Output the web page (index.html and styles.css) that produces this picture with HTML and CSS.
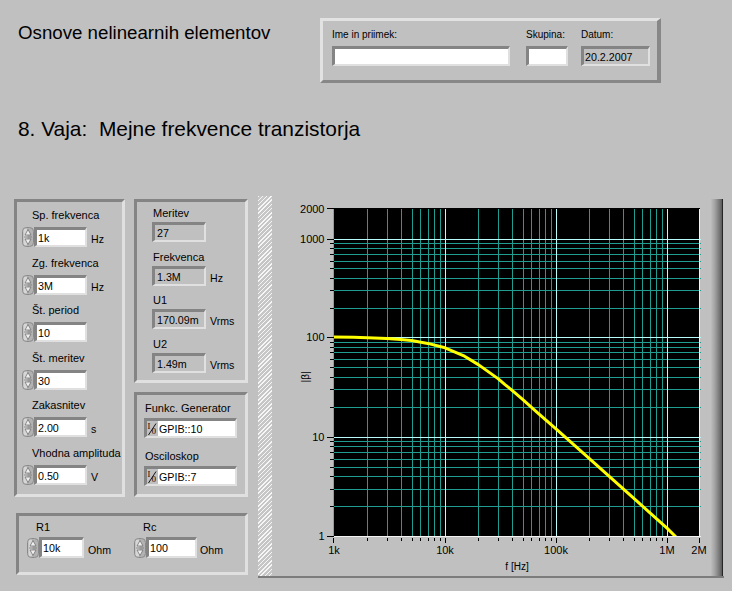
FILE: index.html
```html
<!DOCTYPE html>
<html>
<head>
<meta charset="utf-8">
<title>Mejne frekvence tranzistorja</title>
<link rel="stylesheet" href="styles.css">
</head>
<body>
<svg class="defs" width="0" height="0">
  <symbol id="spin" viewBox="0 0 12 20">
    <rect x="0.5" y="0.5" width="11" height="19" rx="4" fill="#b2b2b2" stroke="#8a8a8a"/>
    <rect x="1.5" y="1.5" width="4" height="17" rx="2" fill="#d6d6d6"/>
    <path d="M2 10H10" stroke="#7a7a7a" stroke-width="0.8"/>
    <path d="M3 8L6 2.5L9 8Z" fill="#eeeeee" stroke="#666" stroke-width="0.7"/>
    <path d="M3 12L6 17.5L9 12Z" fill="#eeeeee" stroke="#666" stroke-width="0.7"/>
  </symbol>
</svg>

<div class="top">
  <h1 class="title">Osnove nelinearnih elementov</h1>
  <div class="idpanel">
    <div class="fld f-name"><span class="slbl">Ime in priimek:</span><div class="box wbox hbox"></div></div>
    <div class="fld f-grp"><span class="slbl">Skupina:</span><div class="box wbox hbox"></div></div>
    <div class="fld f-date"><span class="slbl">Datum:</span><div class="box hbox">20.2.2007</div></div>
  </div>
</div>

<h2 class="subtitle">8. Vaja:  Mejne frekvence tranzistorja</h2>

<div class="main">
  <div class="leftcol">
    <div class="upper">
      <div class="panel p-ctl">
        <div class="crow"><span class="lbl">Sp. frekvenca</span>
          <div class="ctl"><svg class="spin"><use href="#spin"/></svg><div class="box wbox">1k</div><span class="unit">Hz</span></div></div>
        <div class="crow"><span class="lbl">Zg. frekvenca</span>
          <div class="ctl"><svg class="spin"><use href="#spin"/></svg><div class="box wbox">3M</div><span class="unit">Hz</span></div></div>
        <div class="crow"><span class="lbl">Št. period</span>
          <div class="ctl"><svg class="spin"><use href="#spin"/></svg><div class="box wbox">10</div></div></div>
        <div class="crow"><span class="lbl">Št. meritev</span>
          <div class="ctl"><svg class="spin"><use href="#spin"/></svg><div class="box wbox">30</div></div></div>
        <div class="crow"><span class="lbl">Zakasnitev</span>
          <div class="ctl"><svg class="spin"><use href="#spin"/></svg><div class="box wbox">2.00</div><span class="unit">s</span></div></div>
        <div class="crow"><span class="lbl">Vhodna amplituda</span>
          <div class="ctl"><svg class="spin"><use href="#spin"/></svg><div class="box wbox">0.50</div><span class="unit">V</span></div></div>
      </div>
      <div class="col2">
        <div class="panel p-meas">
          <div class="crow"><span class="lbl">Meritev</span>
            <div class="ctl"><div class="box">27</div></div></div>
          <div class="crow"><span class="lbl">Frekvenca</span>
            <div class="ctl"><div class="box">1.3M</div><span class="unit">Hz</span></div></div>
          <div class="crow"><span class="lbl">U1</span>
            <div class="ctl"><div class="box">170.09m</div><span class="unit">Vrms</span></div></div>
          <div class="crow"><span class="lbl">U2</span>
            <div class="ctl"><div class="box">1.49m</div><span class="unit">Vrms</span></div></div>
        </div>
        <div class="panel p-io">
          <div class="crow"><span class="lbl">Funkc. Generator</span>
            <div class="ctl"><div class="box iobox"><svg class="ioic" viewBox="0 0 11 15" width="11" height="15"><text x="0.5" y="7.8" class="io-t">I</text><path d="M1.5 14L9 2.5" stroke="#000" stroke-width="0.9"/><text x="4.8" y="13" class="io-t">0</text></svg><span class="iotxt">GPIB::10</span></div></div></div>
          <div class="crow"><span class="lbl">Osciloskop</span>
            <div class="ctl"><div class="box iobox"><svg class="ioic" viewBox="0 0 11 15" width="11" height="15"><text x="0.5" y="7.8" class="io-t">I</text><path d="M1.5 14L9 2.5" stroke="#000" stroke-width="0.9"/><text x="4.8" y="13" class="io-t">0</text></svg><span class="iotxt">GPIB::7</span></div></div></div>
        </div>
      </div>
    </div>
    <div class="panel p-res">
      <div class="crow grp1"><span class="lbl">R1</span>
        <div class="ctl"><svg class="spin"><use href="#spin"/></svg><div class="box wbox">10k</div><span class="unit">Ohm</span></div></div>
      <div class="crow grp2"><span class="lbl">Rc</span>
        <div class="ctl"><svg class="spin"><use href="#spin"/></svg><div class="box wbox">100</div><span class="unit">Ohm</span></div></div>
    </div>
  </div>

  <div class="graph">
    <div class="g-left"></div>
    <svg class="plot" viewBox="272 196 438 380" width="438" height="380">
      <defs>
        <clipPath id="pc"><rect x="333" y="208" width="367" height="329"/></clipPath>
      </defs>
      <rect x="333" y="208" width="367" height="329" fill="#000"/>
      <g transform="translate(0.5 0.5)" shape-rendering="crispEdges" fill="none">
        <path class="gmin" d="M367 208V536M387 208V536M401 208V536M412 208V536M420 208V536M428 208V536M434 208V536M440 208V536M478 208V536M498 208V536M512 208V536M523 208V536M531 208V536M539 208V536M545 208V536M551 208V536M589 208V536M609 208V536M623 208V536M634 208V536M642 208V536M650 208V536M656 208V536M662 208V536"/>
        <path class="gmin" d="M333 506H700M333 489H700M333 476H700M333 467H700M333 459H700M333 452H700M333 446H700M333 441H700M333 407H700M333 389H700M333 377H700M333 367H700M333 359H700M333 352H700M333 347H700M333 342H700M333 308H700M333 290H700M333 278H700M333 268H700M333 261H700M333 254H700M333 248H700M333 243H700"/>
        <path class="gmaj" d="M445 208V536M556 208V536M667 208V536M333 437H700M333 337H700M333 239H700"/>
      </g>
      <polyline class="curve" clip-path="url(#pc)" points="333,337 353.5,337.3 367.4,337.7 387,338.4 400.8,339.4 411.6,340.6 427.8,343.4 445,347.8 464.5,356.2 478.4,364.6 498,378.6 505,384.6 510,388.6 522.6,399.4 538.8,413.9 556,428.9 589.4,458.6 633.6,498.2 667,528.1 676,537"/>
      <g transform="translate(0.5 0.5)" shape-rendering="crispEdges" fill="none">
        <path stroke="#f4f4f4" d="M333 536H700M699 208V536"/>
        <path stroke="#9a9a9a" d="M333 208V536"/>
        <path stroke="#000" d="M329 506H333M329 489H333M329 476H333M329 467H333M329 459H333M329 452H333M329 446H333M329 441H333M329 407H333M329 389H333M329 377H333M329 367H333M329 359H333M329 352H333M329 347H333M329 342H333M329 308H333M329 290H333M329 278H333M329 268H333M329 261H333M329 254H333M329 248H333M329 243H333"/>
        <path stroke="#000" d="M326 208H333M326 239H333M326 337H333M326 437H333M326 536H333"/>
        <path stroke="#000" d="M367 537V540M387 537V540M401 537V540M412 537V540M420 537V540M428 537V540M434 537V540M440 537V540M478 537V540M498 537V540M512 537V540M523 537V540M531 537V540M539 537V540M545 537V540M551 537V540M589 537V540M609 537V540M623 537V540M634 537V540M642 537V540M650 537V540M656 537V540M662 537V540"/>
        <path stroke="#000" d="M333 537V542M445 537V542M556 537V542M667 537V542M699 537V542"/>
      </g>
      <g class="ax">
        <text x="324.5" y="213" text-anchor="end">2000</text>
        <text x="324.5" y="243" text-anchor="end">1000</text>
        <text x="324.5" y="341" text-anchor="end">100</text>
        <text x="324.5" y="441" text-anchor="end">10</text>
        <text x="324.5" y="540" text-anchor="end">1</text>
        <text x="334" y="554" text-anchor="middle">1k</text>
        <text x="445" y="554" text-anchor="middle">10k</text>
        <text x="556" y="554" text-anchor="middle">100k</text>
        <text x="667" y="554" text-anchor="middle">1M</text>
        <text x="699" y="554" text-anchor="middle">2M</text>
      </g>
      <text class="axn" x="517" y="570" text-anchor="middle">f [Hz]</text>
      <text class="axn" x="0" y="0" text-anchor="middle" transform="translate(309 377) rotate(-90)">|β|</text>
    </svg>
    <div class="g-right"></div>
  </div>
</div>
</body>
</html>
```

FILE: styles.css
```css
* {
  box-sizing: border-box;
}

body {
  margin: 0;
  width: 732px;
  height: 591px;
  overflow: hidden;
  background: #c0c0c0;
  color: #000;
  font-family: "Liberation Sans", Arial, sans-serif;
}

.defs {
  display: block;
  width: 0;
  height: 0;
  overflow: hidden;
}

.io-t {
  font-family: "Liberation Serif", "Times New Roman", serif;
  font-size: 8.5px;
  fill: #000;
}

/* header */
.top {
  display: flex;
  align-items: flex-start;
  height: 83px;
}

.title {
  flex: 0 0 302px;
  margin: 22px 0 0 18px;
  font-size: 18.7px;
  line-height: 21px;
  font-weight: normal;
  white-space: nowrap;
}

.idpanel {
  margin-top: 18px;
  width: 341px;
  height: 65px;
  display: flex;
  align-items: flex-start;
  padding: 8px 0 0 9px;
  border-top: 3px solid #e2e2e2;
  border-left: 3px solid #e2e2e2;
  border-right: 4px solid #878787;
  border-bottom: 3px solid #878787;
}

.fld {
  display: flex;
  flex-direction: column;
}

.slbl {
  font-size: 10px;
  line-height: 12px;
  white-space: nowrap;
}

.fld .box {
  margin-top: 5px;
}

.f-name { width: 178px; }
.f-grp { width: 42px; margin-left: 16px; }
.f-date { width: 69px; margin-left: 13px; }

.hbox {
  width: 100%;
  font-size: 10.7px;
  padding: 1px 0 0 2px;
}

.subtitle {
  margin: 34px 0 0 18px;
  font-size: 20.9px;
  line-height: 24px;
  font-weight: normal;
  white-space: pre;
}

/* main area */
.main {
  display: flex;
  align-items: flex-start;
  margin-top: 55px;
}

.leftcol {
  margin: 3px 0 0 14px;
  width: 234px;
}

.upper {
  display: flex;
  align-items: flex-start;
}

.panel {
  border-top: 3px solid #848484;
  border-left: 3px solid #848484;
  border-right: 3px solid #e0e0e0;
  border-bottom: 3px solid #e0e0e0;
}

.crow {
  display: flex;
  flex-direction: column;
}

.lbl {
  font-size: 11px;
  line-height: 13px;
  height: 13px;
  white-space: nowrap;
}

.ctl {
  display: flex;
  align-items: flex-end;
}

.spin {
  display: block;
  flex: none;
  width: 12px;
  height: 20px;
}

.box {
  flex: none;
  height: 20px;
  border-top: 3px solid #848484;
  border-left: 3px solid #848484;
  border-right: 2px solid #e0e0e0;
  border-bottom: 2px solid #e0e0e0;
  padding: 2px 0 0 1px;
  font-size: 10.7px;
  line-height: 13px;
  white-space: nowrap;
  overflow: hidden;
}

.wbox {
  background: #fff;
}

.unit {
  font-size: 10.6px;
  line-height: 13px;
  margin: 0 0 1px 4px;
  white-space: nowrap;
}

/* controls panel */
.p-ctl {
  width: 111px;
  height: 298px;
  padding: 7px 0 0 5px;
  display: flex;
  flex-direction: column;
  gap: 9.6px;
}

.p-ctl .lbl { margin-left: 10px; }
.p-ctl .ctl { margin-top: 5px; }
.p-ctl .box { width: 53px; }

/* measurement panel */
.col2 {
  margin-left: 9px;
  width: 114px;
  display: flex;
  flex-direction: column;
  gap: 9px;
}

.p-meas {
  height: 184px;
  padding: 5px 0 0 15px;
  display: flex;
  flex-direction: column;
  gap: 8.7px;
}

.p-meas .lbl { margin-left: 1px; }
.p-meas .ctl { margin-top: 2px; }
.p-meas .box { width: 54px; padding-left: 2px; }

/* instruments panel */
.p-io {
  height: 105px;
  padding: 7px 0 0 7px;
  display: flex;
  flex-direction: column;
  gap: 12px;
}

.p-io .lbl { margin-left: 1px; }
.p-io .ctl { margin-top: 3px; }

.iobox {
  width: 93px;
  display: flex;
  padding: 0;
  background: #fff;
}

.ioic {
  display: block;
  flex: none;
  width: 11px;
  height: 15px;
  background: #c0c0c0;
}

.iotxt {
  padding: 2px 0 0 1px;
}

/* resistors panel */
.p-res {
  margin: 16px 0 0 2px;
  width: 232px;
  height: 62px;
  padding: 4.6px 0 0 8px;
  display: flex;
}

.p-res .lbl { margin-left: 9px; }
.p-res .ctl { margin-top: 3px; }
.p-res .box { height: 21px; }
.grp1 { width: 107px; }
.grp1 .box { width: 45px; }
.grp2 .box { width: 51px; }
.grp2 .unit { margin-left: 3px; }

/* graph */
.graph {
  margin-left: 10px;
  width: 466px;
  height: 382px;
  display: flex;
  border-bottom: 2px solid #7c7c7c;
}

.g-left {
  width: 14px;
  background: repeating-linear-gradient(135deg, #f6f6f6 0 1px, #c6c6c6 1px 3px);
}

.plot {
  display: block;
  flex: none;
  width: 438px;
  height: 380px;
}

.g-right {
  width: 14px;
  margin-top: 3px;
  background: linear-gradient(to right, #c4c4c4 0%, #a2a2a2 35%, #7a7a7a 65%, #5a5a5a 85%, #262626 86%, #262626 93%, #c0c0c0 93%);
}

.gmin {
  stroke: #1f9d90;
}

.gmaj {
  stroke: #b8fbfb;
}

.curve {
  fill: none;
  stroke: #ffff00;
  stroke-width: 3;
  stroke-linejoin: round;
}

.ax {
  font-family: "Liberation Sans", Arial, sans-serif;
  font-size: 11px;
  fill: #000;
}

.axn {
  font-family: "Liberation Sans", Arial, sans-serif;
  font-size: 10px;
  fill: #000;
}
```
